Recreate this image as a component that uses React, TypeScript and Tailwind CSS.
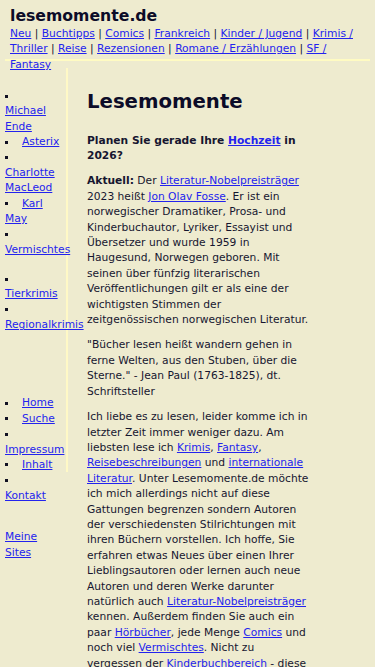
const link = "text-[#2323ee] underline";

function Bullet() {
  return (
    <span className="inline-block w-[13.6px] align-middle">
      <span className="block h-[3px] w-[3px] bg-[#111122]" />
    </span>
  );
}

function SideList({ items, className }: { items: string[]; className: string }) {
  return (
    <ul className={className}>
      {items.map((item) => (
        <li key={item}>
          <Bullet />{" "}
          <a href="#" className={link}>
            {item}
          </a>
        </li>
      ))}
    </ul>
  );
}

const navItems = [
  "Neu",
  "Buchtipps",
  "Comics",
  "Frankreich",
  "Kinder / Jugend",
  "Krimis / Thriller",
  "Reise",
  "Rezensionen",
  "Romane / Erzählungen",
  "SF / Fantasy",
];

export default function App() {
  return (
    <div className="min-h-screen bg-[#eeebcf] font-['DejaVu_Sans',sans-serif] text-[10.7px] leading-[15.4px] text-[#16162f]">
      <header className="mx-[5px] h-[61px] border-b-2 border-[#fffbc2] px-[5px] pt-[6px]">
        <div className="text-[15.7px] font-bold leading-[20px] text-[#0c0c28]">lesemomente.de</div>
        <nav>
          {navItems.map((item, i) => (
            <span key={item}>
              {i > 0 ? " | " : null}
              <a href="#" className={link}>
                {item}
              </a>
            </span>
          ))}
        </nav>
      </header>

      <div className="mt-[7px] flex items-start">
        <aside className="ml-[5px] h-[404px] w-[63px] shrink-0 border-r-2 border-[#fff9c6] pr-[4px]">
          <SideList
            className="mt-[20px]"
            items={["Michael Ende", "Asterix", "Charlotte MacLeod", "Karl May", "Vermischtes"]}
          />
          <SideList className="mt-[13.6px]" items={["Tierkrimis", "Regionalkrimis"]} />
          <SideList className="mt-[62.6px]" items={["Home", "Suche", "Impressum", "Inhalt", "Kontakt"]} />
          <div className="mt-[26.2px]">
            <a href="#" className={link}>
              Meine Sites
            </a>
          </div>
        </aside>

        <main className="ml-[19px] w-[225px] shrink-0">
          <h1 className="mt-[22px] text-[19.7px] font-bold leading-[24px] text-[#0c0c28]">Lesemomente</h1>
          <p className="mt-[18.6px] font-bold">
            Planen Sie gerade Ihre{" "}
            <a href="#" className={link}>
              Hochzeit
            </a>{" "}
            in 2026?
          </p>
          <p className="mt-[10px]">
            <b>Aktuell:</b> Der{" "}
            <a href="#" className={link}>
              Literatur-Nobelpreisträger
            </a>{" "}
            2023 heißt{" "}
            <a href="#" className={link}>
              Jon Olav Fosse
            </a>
            . Er ist ein norwegischer Dramatiker, Prosa- und Kinderbuchautor, Lyriker, Essayist und
            Übersetzer und wurde 1959 in Haugesund, Norwegen geboren. Mit seinen über fünfzig
            literarischen Veröffentlichungen gilt er als eine der wichtigsten Stimmen der
            zeitgenössischen norwegischen Literatur.
          </p>
          <p className="mt-[10px]">
            "Bücher lesen heißt wandern gehen in ferne Welten, aus den Stuben, über die Sterne." - Jean
            Paul (1763-1825), dt. Schriftsteller
          </p>
          <p className="mt-[10px]">
            Ich liebe es zu lesen, leider komme ich in letzter Zeit immer weniger dazu. Am liebsten lese
            ich{" "}
            <a href="#" className={link}>
              Krimis
            </a>
            ,{" "}
            <a href="#" className={link}>
              Fantasy
            </a>
            ,{" "}
            <a href="#" className={link}>
              Reisebeschreibungen
            </a>{" "}
            und{" "}
            <a href="#" className={link}>
              internationale Literatur
            </a>
            . Unter Lesemomente.de möchte ich mich allerdings nicht auf diese Gattungen begrenzen
            sondern Autoren der verschiedensten Stilrichtungen mit ihren Büchern vorstellen. Ich hoffe,
            Sie erfahren etwas Neues über einen Ihrer Lieblingsautoren oder lernen auch neue Autoren und
            deren Werke darunter natürlich auch{" "}
            <a href="#" className={link}>
              Literatur-Nobelpreisträger
            </a>{" "}
            kennen. Außerdem finden Sie auch ein paar{" "}
            <a href="#" className={link}>
              Hörbücher
            </a>
            , jede Menge{" "}
            <a href="#" className={link}>
              Comics
            </a>{" "}
            und noch viel{" "}
            <a href="#" className={link}>
              Vermischtes
            </a>
            . Nicht zu vergessen der{" "}
            <a href="#" className={link}>
              Kinderbuchbereich
            </a>{" "}
            - diese Seiten werden ständig erweitert.
          </p>
        </main>
      </div>
    </div>
  );
}
